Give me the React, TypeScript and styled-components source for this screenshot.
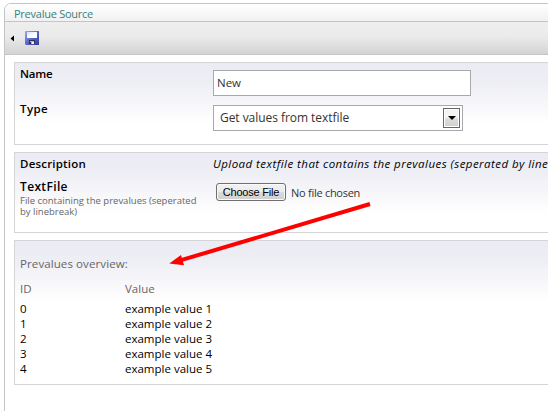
import React from "react";
import styled, { createGlobalStyle } from "styled-components";

const GlobalStyle = createGlobalStyle`
  * { box-sizing: border-box; }
  html, body { margin: 0; overflow: hidden; background: #fff; }
  body { font: 11.5px/15px "Trebuchet MS", "Open Sans", "Noto Sans", sans-serif; color: #000; }
`;

const Viewport = styled.div`
  width: 548px;
  height: 411px;
  overflow: hidden;
  padding: 3px 0 0 4px;
`;

const Window = styled.div`
  width: 600px;
  height: 430px;
  border: 1px solid #c5c5c5;
  border-radius: 7px 7px 0 0;
  overflow: hidden;
`;

const TitleBar = styled.div`
  height: 18px;
  padding: 2px 0 0 9px;
  border-bottom: 1px solid #c5c5c5;
  background: linear-gradient(#fff, #f1f1f1);
  color: #378080;
`;

const Toolbar = styled.div`
  height: 33px;
  display: flex;
  align-items: center;
  gap: 11px;
  padding-left: 5px;
  border-bottom: 1px solid #c5c5c5;
  background: linear-gradient(#eee 0%, #ebebeb 45%, #d3d3d3 100%);
  svg { display: block; }
`;

const Content = styled.div`
  display: flex;
  flex-direction: column;
  gap: 7px;
  padding: 7px 0 0 9px;
`;

const Pane = styled.section<{ $height: number; $top: number }>`
  height: ${(p) => p.$height}px;
  padding: ${(p) => p.$top}px 0 0 5px;
  border: 1px solid #d5d5d8;
  background: linear-gradient(#ebebf3 0, #eeeef5 20px, #fff 60px);
`;

const Field = styled.div<{ $height: number; $inset?: number }>`
  display: grid;
  grid-template-columns: 193px 1fr;
  align-items: start;
  height: ${(p) => p.$height}px;
  > :last-child { margin-top: ${(p) => p.$inset ?? 0}px; }
`;

const Text = styled.div<{ $track?: number; $size?: number }>`
  white-space: nowrap;
  letter-spacing: ${(p) => p.$track ?? 0}px;
  font-size: ${(p) => p.$size ?? 11.5}px;
`;

const Label = styled(Text)`
  font-weight: 600;
`;

const Help = styled(Text)`
  margin-top: 1px;
  color: #666;
  line-height: 11px;
  white-space: pre;
`;

const Note = styled(Text)`
  font-style: italic;
`;

const Input = styled.div`
  width: 258px;
  height: 26px;
  padding: 0 3px;
  border: 1px solid #a7a7ae;
  background: #fff;
  color: #333;
  line-height: 24px;
`;

const Select = styled.div`
  display: flex;
  justify-content: space-between;
  width: 250px;
  height: 26px;
  padding: 2px 2px 2px 6px;
  border: 1px solid #a7a7ae;
  background: #fff;
  color: #333;
  line-height: 20px;
`;

const DropButton = styled.div`
  display: grid;
  place-items: center;
  width: 17px;
  height: 20px;
  border: 1px solid #666;
  box-shadow: inset 0 0 0 1px #fff;
  background: linear-gradient(#f3f3f3 48%, #dedede 50%, #cfcfcf);
`;

const FileRow = styled.div`
  display: flex;
  align-items: center;
  gap: 5px;
  padding: 0 0 0 3px;
  color: #333;
`;

const FileButton = styled.button`
  width: 70px;
  height: 18px;
  padding: 0;
  border: 1px solid #707070;
  border-radius: 3px;
  box-shadow: inset 0 0 0 1px #fafafa;
  background: linear-gradient(#f2f2f2 0, #ebebeb 48%, #dcdcdc 50%, #cfcfcf);
  color: #000;
  font: 11px/14px "Liberation Sans", Arial, sans-serif;
  letter-spacing: -0.2px;
  white-space: nowrap;
`;

const Row = styled.div<{ $head?: boolean }>`
  display: grid;
  grid-template-columns: 105px 1fr;
  line-height: 15px;
  color: ${(p) => (p.$head ? "#666" : "#000")};
  margin: ${(p) => (p.$head ? "10px 0 5px" : "0")};
`;

const Heading = styled(Text)`
  color: #666;
`;

const Arrow = styled.svg`
  position: absolute;
  left: 165px;
  top: 198px;
  pointer-events: none;
`;

const values = [1, 2, 3, 4, 5].map((n) => `example value ${n}`);

export default function App() {
  return (
    <Viewport>
      <GlobalStyle />
      <Window>
        <TitleBar><Text $size={11} $track={-0.25}>Prevalue Source</Text></TitleBar>
        <Toolbar>
          <svg width="4" height="7" viewBox="0 0 4 7"><path d="M4 0.5v6L0.5 3.5z" fill="#000" /></svg>
          <svg width="14" height="14" viewBox="0 0 14 14">
            <defs>
              <linearGradient id="disk" x1="0" y1="0" x2="1" y2="1">
                <stop offset="0" stopColor="#a0a8ec" />
                <stop offset="0.5" stopColor="#5c66cc" />
                <stop offset="1" stopColor="#343a9c" />
              </linearGradient>
              <linearGradient id="label" x1="0" y1="0" x2="1" y2="1">
                <stop offset="0" stopColor="#d3e2fb" />
                <stop offset="0.6" stopColor="#fff" />
              </linearGradient>
            </defs>
            <path d="M0 0h14v14H1L0 13z" fill="url(#disk)" />
            <path d="M2 1h10v6H2z" fill="url(#label)" />
            <path d="M4 9h6v4H4z" fill="#2e3450" />
            <path d="M5 10h4v3H5z" fill="#aebbc8" />
            <path d="M7 11h2v2H7z" fill="#f0f4f4" />
            <path d="M5 11h1v2H5z" fill="#2e3450" />
          </svg>
        </Toolbar>
        <Content>
          <Pane $height={83} $top={3}>
            <Field $height={35} $inset={4}>
              <Label $track={-0.25}>Name</Label>
              <Input><Text>New</Text></Input>
            </Field>
            <Field $height={35} $inset={4}>
              <Label $track={0.4}>Type</Label>
              <Select>
                <Text $size={12} $track={-0.05}>Get values from textfile</Text>
                <DropButton>
                  <svg width="8" height="4" viewBox="0 0 8 4"><path d="M0 0h8L4 4z" fill="#000" /></svg>
                </DropButton>
              </Select>
            </Field>
          </Pane>
          <Pane $height={81} $top={3}>
            <Field $height={23}>
              <Label $track={0.2}>Description</Label>
              <Note $track={0.45}>Upload textfile that contains the prevalues (seperated by linebreak)</Note>
            </Field>
            <Field $height={40} $inset={4}>
              <div>
                <Label $size={12} $track={0.35}>TextFile</Label>
                <Help $size={9.5}>{"File containing the prevalues (seperated\nby linebreak)"}</Help>
              </div>
              <FileRow>
                <FileButton type="button">Choose File</FileButton>
                <Text $size={11} $track={-0.27}>No file chosen</Text>
              </FileRow>
            </Field>
          </Pane>
          <Pane $height={145} $top={15}>
            <Heading $track={0.1}>Prevalues overview:</Heading>
            <Row $head><Text>ID</Text><Text>Value</Text></Row>
            {values.map((value, id) => (
              <Row key={id}><Text>{id}</Text><Text>{value}</Text></Row>
            ))}
          </Pane>
        </Content>
      </Window>
      <Arrow width="210" height="72" viewBox="165 198 210 72">
        <path d="M370 204L181 260.2" stroke="#f00" strokeWidth="4" />
        <path d="M169.3 263.6L181 255l3 10.2z" fill="#f00" />
      </Arrow>
    </Viewport>
  );
}
